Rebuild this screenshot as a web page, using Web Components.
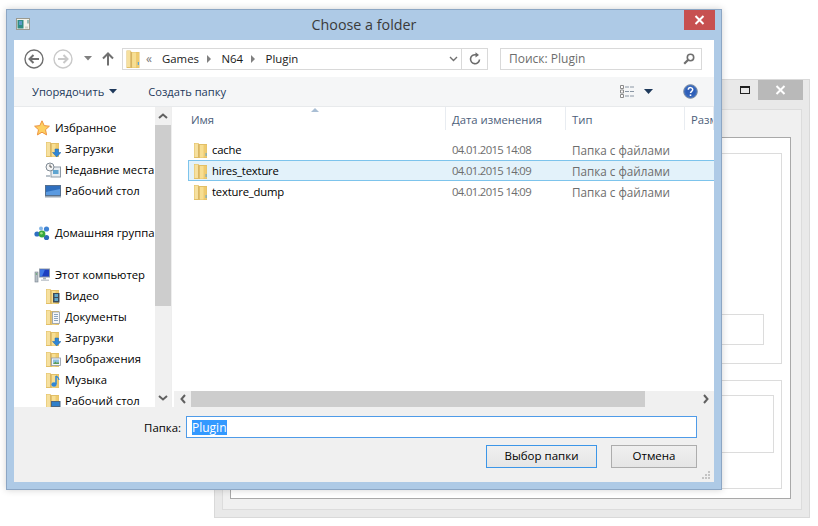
<!DOCTYPE html>
<html>
<head>
<meta charset="utf-8">
<title>Choose a folder</title>
<style>
    html, body { margin: 0; height: 100%; background: #fff; overflow: hidden; }
    body { font: 11.3px "Open Sans", "Noto Sans", sans-serif; }
</style>
</head>
<body>
<back-window></back-window>
<file-dialog heading="Choose a folder">
    <tree-item slot="tree" icon="star" label="Избранное"></tree-item>
    <tree-item slot="tree" icon="downloads" label="Загрузки" sub></tree-item>
    <tree-item slot="tree" icon="recent" label="Недавние места" sub></tree-item>
    <tree-item slot="tree" icon="desktop" label="Рабочий стол" sub></tree-item>
    <tree-item slot="tree"></tree-item>
    <tree-item slot="tree" icon="homegroup" label="Домашняя группа"></tree-item>
    <tree-item slot="tree"></tree-item>
    <tree-item slot="tree" icon="computer" label="Этот компьютер"></tree-item>
    <tree-item slot="tree" icon="video" label="Видео" sub></tree-item>
    <tree-item slot="tree" icon="docs" label="Документы" sub></tree-item>
    <tree-item slot="tree" icon="downloads" label="Загрузки" sub></tree-item>
    <tree-item slot="tree" icon="images" label="Изображения" sub></tree-item>
    <tree-item slot="tree" icon="music" label="Музыка" sub></tree-item>
    <tree-item slot="tree" icon="deskfolder" label="Рабочий стол" sub></tree-item>

    <file-row slot="files" name="cache" date="04.01.2015 14:08" type="Папка с файлами"></file-row>
    <file-row slot="files" name="hires_texture" date="04.01.2015 14:09" type="Папка с файлами" selected></file-row>
    <file-row slot="files" name="texture_dump" date="04.01.2015 14:09" type="Папка с файлами"></file-row>
</file-dialog>

<script>
'use strict';

const folderBase = `
    <path d="M1 1h4.2l1 1H14v14H1z" fill="#e2bf66"/>
    <path d="M1.5 1.5h3.7V15H1.5z" fill="#f6e09f"/>
    <path d="M5.2 2l1.6 1v13L5.2 15z" fill="#d6b262"/>
    <path d="M6.8 3H13.5v12.5H6.8z" fill="#efcb70"/>
    <path d="M6.8 3H10.5v12.5H6.8z" fill="#f7de92"/>`;

const icons = {
    folder: folderBase + '<path d="M12.6 11h1v3h-1z" fill="#5aa5d8"/>',
    star: '<path d="M8 .8l2.2 4.8 5.2.6-3.9 3.5 1.1 5.2L8 12.2l-4.6 2.7 1.1-5.2L.6 6.2l5.2-.6z" fill="#fdd062" stroke="#ee9440"/>',
    downloads: folderBase + '<path d="M10 8h3.5v3.5H16L11.7 16 7.5 11.5H10z" fill="#2f86d6" stroke="#1b66ad" stroke-width=".5"/>',
    recent: '<rect x="6" y="5" width="9.5" height="10" fill="#e8edf1" stroke="#8d99a5"/><rect x="8" y="8" width="5.5" height="4" fill="#5fa4d0"/><circle cx="5" cy="5" r="4" fill="#f5f5f5" stroke="#7f8a94"/><path d="M5 2.5V5h2" fill="none" stroke="#555"/><path d="M1 13h4v2H1z" fill="#b9c2ca"/>',
    desktop: '<rect x="0" y="2" width="16" height="11" fill="#55708f"/><rect x="1" y="3" width="14" height="9" fill="#2f6fbe"/><path d="M1 9l14-3v6H1z" fill="#5a9ae0"/><rect x="0" y="13" width="16" height="1.5" fill="#9aa6b2"/>',
    homegroup: '<circle cx="3" cy="9" r="2.6" fill="#2e6fc2"/><circle cx="12.5" cy="4" r="2.6" fill="#3f83d4"/><circle cx="12.5" cy="12.5" r="2.6" fill="#2c69b8"/><circle cx="7" cy="3.4" r="2" fill="#86b7e6"/><circle cx="8" cy="9" r="3.4" fill="#37a83f"/><circle cx="7.4" cy="8.2" r="1.3" fill="#9adf7e"/>',
    computer: '<rect x="5" y="1.5" width="11" height="9" fill="#8e9aa6"/><rect x="6" y="2.5" width="9" height="7" fill="#1d3fc0"/><path d="M6 2.5h5l-3 7H6z" fill="#3f78e6"/><rect x="9" y="10.5" width="3" height="2" fill="#aab2ba"/><rect x="7" y="12.5" width="8" height="1.5" fill="#c6ccd2"/><rect x="1" y="5" width="3" height="10" fill="#b7bfc6" stroke="#77838e" stroke-width=".6"/><rect x="1.8" y="6.5" width="1.4" height="1" fill="#3f9b45"/>',
    video: folderBase + '<rect x="8" y="5" width="6.5" height="9.5" fill="#3c4a57"/><path d="M9.5 6h3.5v3H9.5zM9.5 10h3.5v3H9.5z" fill="#5fa6c9"/>',
    docs: folderBase + '<rect x="7.5" y="3" width="7" height="11.5" fill="#f6f7f9" stroke="#8f9aa6" stroke-width=".8"/><path d="M9 5.5h4M9 7.5h4M9 9.5h4M9 11.5h4" stroke="#8ba4bd"/>',
    images: folderBase + '<rect x="6.5" y="7" width="9" height="7.5" fill="#f4f6f8" stroke="#8f9aa6" stroke-width=".8"/><rect x="8" y="8.5" width="6" height="4.5" fill="#8fc0e2"/><path d="M8 13l2.5-2.5 1.5 1.5 1-1 1 1v1z" fill="#5c9c56"/>',
    music: folderBase + '<path d="M11 4v8" stroke="#2f86d6" stroke-width="1.5"/><path d="M11 4c1.5 1 3 1.6 3 4" fill="none" stroke="#2f86d6" stroke-width="1.2"/><ellipse cx="9" cy="12.5" rx="2.6" ry="2.2" fill="#2f86d6"/>',
    deskfolder: folderBase + '<rect x="6" y="8" width="9.5" height="6" fill="#4a6480"/><rect x="7" y="9" width="7.5" height="4" fill="#2f7fc9"/><rect x="6" y="14" width="9.5" height="1.5" fill="#33475b"/>'
};

class AppIcon extends HTMLElement {
    connectedCallback() {
        const size = this.getAttribute('size') || 16;
        this.attachShadow({ mode: 'open' }).innerHTML = `
            <style>:host { display: block; width: ${size}px; height: ${size}px; } svg { display: block; }</style>
            <svg width="${size}" height="${size}" viewBox="0 0 16 16">${icons[this.getAttribute('name')]}</svg>`;
    }
}

class TreeItem extends HTMLElement {
    connectedCallback() {
        const icon = this.getAttribute('icon');
        const sub = this.hasAttribute('sub');
        this.attachShadow({ mode: 'open' }).innerHTML = `
            <style>
                :host { display: flex; align-items: center; height: 21px; gap: ${sub ? 4 : 5}px; white-space: nowrap;
                    padding-left: ${sub ? 31 : 20}px; color: #000; }
                span { position: relative; top: -.5px; }
            </style>
            ${icon ? `<app-icon name="${icon}"></app-icon><span>${this.getAttribute('label')}</span>` : ''}`;
    }
}

class FileRow extends HTMLElement {
    connectedCallback() {
        const on = this.hasAttribute('selected');
        this.attachShadow({ mode: 'open' }).innerHTML = `
            <style>
                :host { display: grid; grid-template-columns: 263px 120px 1fr; align-items: center; box-sizing: border-box;
                    width: 560px; height: 21px; white-space: nowrap; margin-left: 14px;
                    border: 1px solid ${on ? '#7dc4ec' : 'transparent'}; background: ${on ? '#e3f2fa' : 'transparent'}; }
                .name { display: flex; align-items: center; gap: 3px; padding-left: 4px; color: #000; letter-spacing: -.2px; }
                .date { color: #6d6d6d; letter-spacing: -.65px; }
                .type { color: #6d6d6d; font-size: 11.7px; }
            </style>
            <div class="name"><app-icon name="folder"></app-icon><span>${this.getAttribute('name')}</span></div>
            <div class="date">${this.getAttribute('date')}</div>
            <div class="type">${this.getAttribute('type')}</div>`;
    }
}

class ScrollBar extends HTMLElement {
    connectedCallback() {
        const vertical = this.getAttribute('orient') === 'v';
        const a = vertical ? 'M4 10l4-3.5 4 3.5' : 'M10 4L6.5 8l3.5 4';
        const b = vertical ? 'M4 6l4 3.5L12 6' : 'M6 4l3.5 4L6 12';
        this.attachShadow({ mode: 'open' }).innerHTML = `
            <style>
                :host { display: flex; flex-direction: ${vertical ? 'column' : 'row'}; background: #f0f0f0; flex: none;
                    ${vertical ? 'width: 16px;' : 'height: 16px;'} }
                .arrow { flex: none; display: flex; align-items: center; justify-content: center;
                    ${vertical ? 'height: 18px;' : 'width: 17px;'} }
                .thumb { background: #cdcdcd; flex: none; ${this.getAttribute('style-thumb')} }
                .rest { flex: 1; }
                svg { display: block; }
                path { fill: none; stroke: #606060; stroke-width: 2; }
            </style>
            <div class="arrow"><svg width="16" height="16" viewBox="0 0 16 16"><path d="${a}"/></svg></div>
            <div class="thumb"></div>
            <div class="rest"></div>
            <div class="arrow"><svg width="16" height="16" viewBox="0 0 16 16"><path d="${b}"/></svg></div>`;
    }
}

class AddressBar extends HTMLElement {
    connectedCallback() {
        const sep = '<svg class="sep" width="5" height="8" viewBox="0 0 5 8"><path d="M0 0l4 4-4 4z" fill="#808080"/></svg>';
        this.attachShadow({ mode: 'open' }).innerHTML = `
            <style>
                :host { display: flex; align-items: center; box-sizing: border-box; width: 366px; height: 22px;
                    border: 1px solid #d9d9d9; color: #1a1a1a; white-space: nowrap; font-size: 11.4px; }
                .big { margin: 0 0 0 3px; width: 14px; height: 18px; flex: none; }
                .more { margin-left: 6px; color: #777; width: 15px; letter-spacing: -1px; font-size: 12px; }
                .crumb { margin-left: 1px; }
                .sep { margin: 0 0 0 8px; }
                .crumb + .sep + .crumb { margin-left: 9.5px; }
                .end { margin-left: auto; display: flex; height: 100%; align-items: center; }
                .chev { width: 15px; display: flex; justify-content: center; }
                .refresh { width: 25px; height: 100%; border-left: 1px solid #d9d9d9; display: flex; align-items: center; justify-content: center; }
            </style>
            <svg class="big" viewBox="0 0 14 18">
                <path d="M.5 .5h4l1 1.5h8V18H.5z" fill="#e2bf66"/>
                <path d="M1 1h3.5V17H1z" fill="#f6e09f"/>
                <path d="M4.5 1.5l1.6 1V18l-1.6-1z" fill="#d6b262"/>
                <path d="M6.1 2.5H13V17.5H6.1z" fill="#efcb70"/>
                <path d="M6.1 2.5H10V17.5H6.1z" fill="#f7de92"/>
                <path d="M11.8 12h1.2v3h-1.2z" fill="#5aa5d8"/>
            </svg>
            <span class="more">«</span>
            <span class="crumb">Games</span>${sep}
            <span class="crumb">N64</span>${sep}
            <span class="crumb">Plugin</span>
            <div class="end">
                <div class="chev"><svg width="9" height="6" viewBox="0 0 9 6"><path d="M1 1l3.5 3.5L8 1" fill="none" stroke="#707070" stroke-width="1.4"/></svg></div>
                <div class="refresh"><svg width="14" height="14" viewBox="0 0 14 14"><path d="M11.5 7.5A4.5 4.5 0 1 1 8 2.8" fill="none" stroke="#6b6b6b" stroke-width="1.6"/><path d="M7.5 .2v5.4L11 2.9z" fill="#6b6b6b"/></svg></div>
            </div>`;
    }
}

class FileDialog extends HTMLElement {
    constructor() {
        super();
        const heading = this.getAttribute('heading');
        this.attachShadow({ mode: 'open' }).innerHTML = `
            <style>
                :host { position: absolute; left: 6px; top: 9px; width: 716px; height: 481px; box-sizing: border-box;
                    display: flex; flex-direction: column; padding: 0 7px 7px; background: #aecae6; border: 1px solid #8ca6c4;
                    box-shadow: 0 0 7px rgba(0,0,0,.18); font: 11.3px "Open Sans", "Noto Sans", sans-serif; }
                .title { height: 30px; flex: none; display: grid; grid-template-columns: 1fr auto 1fr; color: #3a3a3a; font-size: 14.3px; }
                .title h1 { margin: 0; font: inherit; line-height: 29px; }
                .logo { margin: 8px 0 0 2px; display: block; }
                .close { justify-self: end; width: 31px; height: 20px; margin-right: -1px; background: #c75050;
                    display: flex; align-items: center; justify-content: center; }
                .body { flex: 1; min-height: 0; display: flex; flex-direction: column; background: #fff; }
                .nav { height: 37px; flex: none; display: flex; align-items: center; padding-left: 10px; }
                .nav svg { display: block; flex: none; }
                .search { margin-left: 12px; width: 202px; height: 22px; box-sizing: border-box; border: 1px solid #d9d9d9;
                    display: flex; align-items: center; justify-content: space-between; padding: 0 6px 0 8px; color: #6d6d6d; font-size: 12px; }
                .commands { height: 30px; flex: none; box-sizing: border-box; background: #f5f6f7; border-bottom: 1px solid #e8eaec;
                    display: flex; align-items: center; padding-left: 18px; color: #1e395b; font-size: 11.15px; }
                .commands svg { display: block; flex: none; }
                .main { flex: 1; min-height: 0; display: flex; }
                .tree { width: 141px; flex: none; padding-top: 10px; box-sizing: border-box; overflow: hidden; }
                .gap { width: 2px; box-sizing: content-box; flex: none; border-left: 1px solid #eeeeee; }
                .list { flex: 1; min-width: 0; display: flex; flex-direction: column; overflow: hidden; }
                .head { height: 23px; flex: none; position: relative; display: grid; grid-template-columns: 272px 120px 119px 1fr; color: #4c607a; }
                .head div { padding-left: 6px; line-height: 26px; border-right: 1px solid #e8ecf1; white-space: nowrap; overflow: hidden; }
                .head div:first-child { padding-left: 17px; }
                .head div:last-child { border: 0; }
                .sort { position: absolute; left: 137px; top: 1px; }
                .rows { flex: 1; min-height: 0; padding-top: 9px; overflow: hidden; }
                .bottom { height: 75px; flex: none; box-sizing: border-box; position: relative; background: #f0f0f0;
                    padding: 9px 17px 0 0; display: flex; flex-direction: column; gap: 7px; }
                .field { display: flex; justify-content: flex-end; align-items: center; gap: 5px; color: #000; font-size: 11.4px; }
                .input { width: 511px; height: 22px; box-sizing: border-box; border: 1px solid #4f9be8; background: #fff;
                    padding-left: 5px; display: flex; align-items: center; font-size: 12px; }
                .input span { background: #3399ff; color: #fff; line-height: 15px; }
                .buttons { display: flex; justify-content: flex-end; gap: 14px; }
                .btn { width: 86px; height: 23px; box-sizing: border-box; border: 1px solid #adadad; color: #000; font-size: 11.5px;
                    background: linear-gradient(#f0f0f0, #e5e5e5); text-align: center; line-height: 20px; }
                .btn.primary { width: 111px; border-color: #3c96e8; }
                .grip { position: absolute; right: 3px; bottom: 2px; }
            </style>
            <div class="title">
                <svg class="logo" width="14" height="12" viewBox="0 0 14 12">
                    <rect x=".5" y=".5" width="13" height="11" fill="#f2f2ea" stroke="#9a9a90"/>
                    <rect x="1.5" y="2" width="6" height="8.5" fill="#2f8c83"/>
                    <rect x="3" y="3" width="3" height="4" fill="#5a9ac8"/>
                    <rect x="9" y="8.5" width="3" height="2" fill="#cfcfc6"/>
                    <rect x="11.5" y="2" width="1" height="3.5" fill="#3f8a84"/>
                </svg>
                <h1>${heading}</h1>
                <div class="close"><svg width="11" height="10" viewBox="0 0 11 10"><path d="M1.5 1l8 8M9.5 1l-8 8" stroke="#fff" stroke-width="2"/></svg></div>
            </div>
            <div class="body">
                <div class="nav">
                    <svg width="20" height="20" viewBox="0 0 20 20"><circle cx="10" cy="10" r="9" fill="none" stroke="#6f6f6f" stroke-width="1.4"/><path d="M15 10H6M9.5 6L5.5 10l4 4" fill="none" stroke="#6f6f6f" stroke-width="2"/></svg>
                    <svg style="margin-left:9px" width="20" height="20" viewBox="0 0 20 20"><circle cx="10" cy="10" r="9" fill="none" stroke="#c9c9c9" stroke-width="1.4"/><path d="M5 10h9M10.5 6l4 4-4 4" fill="none" stroke="#c9c9c9" stroke-width="2"/></svg>
                    <svg style="margin-left:11px" width="8" height="5" viewBox="0 0 8 5"><path d="M0 0h8L4 4.5z" fill="#808080"/></svg>
                    <svg style="margin-left:10px" width="12" height="14" viewBox="0 0 12 14"><path d="M6 13.5V2M1 6.5L6 1.5l5 5" fill="none" stroke="#707070" stroke-width="2"/></svg>
                    <address-bar style="margin-left:8px"></address-bar>
                    <div class="search"><span>Поиск: Plugin</span><svg width="12" height="12" viewBox="0 0 12 12"><circle cx="7.5" cy="4.5" r="3.2" fill="none" stroke="#6f6f6f" stroke-width="1.6"/><path d="M5 7L1.2 10.8" stroke="#6f6f6f" stroke-width="2.2"/></svg></div>
                </div>
                <div class="commands">
                    <span>Упорядочить</span>
                    <svg style="margin-left:5px" width="8" height="5" viewBox="0 0 8 5"><path d="M0 0h8L4 4.5z" fill="#1e395b"/></svg>
                    <span style="margin-left:31px">Создать папку</span>
                    <svg style="margin-left:auto" width="15" height="13" viewBox="0 0 15 13"><path d="M.5.5h3v3h-3zM.5 5h3v3h-3zM.5 9.5h3v3h-3z" fill="#fff" stroke="#8a8a8a"/><path d="M5 2h10M5 6.5h10M5 11h10" stroke="#8a96a4" stroke-dasharray="4 1"/><path d="M2 2h.1M2 6.5h.1M2 11h.1" stroke="#c0504d"/></svg>
                    <svg style="margin-left:9px" width="9" height="5" viewBox="0 0 9 5"><path d="M0 0h9L4.5 5z" fill="#1e395b"/></svg>
                    <svg style="margin:0 16px 0 30px" width="15" height="15" viewBox="0 0 15 15"><circle cx="7.5" cy="7.5" r="6.8" fill="#3a6cc0" stroke="#7a8aa0"/><circle cx="7.5" cy="7.5" r="5" fill="#2f5fb8"/><path d="M5.3 5.8c.2-3 4.6-2.8 4.4 0-.1 1.5-2.2 1.6-2.2 3.3" fill="none" stroke="#fff" stroke-width="1.5"/><path d="M6.7 10.4h1.6V12H6.7z" fill="#fff"/></svg>
                </div>
                <div class="main">
                    <div class="tree"><slot name="tree"></slot></div>
                    <scroll-bar orient="v" style-thumb="height:181px"></scroll-bar>
                    <div class="gap"></div>
                    <div class="list">
                        <div class="head">
                            <div>Имя</div><div>Дата изменения</div><div>Тип</div><div>Размер</div>
                            <svg class="sort" width="8" height="4" viewBox="0 0 8 4"><path d="M4 0l4 4H0z" fill="#a9bed4"/></svg>
                        </div>
                        <div class="rows"><slot name="files"></slot></div>
                        <scroll-bar orient="h" style-thumb="width:454px"></scroll-bar>
                    </div>
                </div>
                <div class="bottom">
                    <div class="field"><span>Папка:</span><div class="input"><span>Plugin</span></div></div>
                    <div class="buttons"><div class="btn primary">Выбор папки</div><div class="btn">Отмена</div></div>
                    <svg class="grip" width="9" height="9" viewBox="0 0 9 9"><path d="M6 0h2v2H6zM3 3h2v2H3zM6 3h2v2H6zM0 6h2v2H0zM3 6h2v2H3zM6 6h2v2H6z" fill="#c4c4c4"/></svg>
                </div>
            </div>`;
    }
}

class BackWindow extends HTMLElement {
    constructor() {
        super();
        this.attachShadow({ mode: 'open' }).innerHTML = `
            <style>
                :host { position: absolute; left: 214px; top: 79px; width: 596px; height: 439px; box-sizing: border-box;
                    display: flex; flex-direction: column; padding: 0 7px 7px; background: #e9e9e9; border: 1px solid #d9d9d9; }
                .caption { height: 29px; flex: none; display: flex; justify-content: flex-end; }
                .max { width: 10px; height: 8px; box-sizing: border-box; border: 1px solid #222; border-top-width: 2px; margin: 6px 8px 0 0; }
                .close { width: 45px; height: 20px; background: #b9b9b9; margin-right: -1px; display: flex; align-items: center; justify-content: center; }
                .client { flex: 1; display: flex; box-sizing: border-box; background: #f0f0f0; border: 1px solid #dcdcdc; padding: 27px 10px 10px 7px; }
                .group { flex: 1; box-sizing: border-box; background: #fff; border: 1px solid #a9a9a9; padding: 15px 8px 9px 10px;
                    display: flex; flex-direction: column; gap: 16px; }
                .box { box-sizing: border-box; border: 1px solid #dcdcdc; background: #fff; }
                .upper { height: 211px; padding: 160px 17px 18px 0; display: flex; }
                .lower { flex: 1; padding: 14px 7px 35px 0; display: flex; }
                .inner { flex: 1; box-sizing: border-box; border: 1px solid #dcdcdc; }
            </style>
            <div class="caption">
                <div class="max"></div>
                <div class="close"><svg width="11" height="10" viewBox="0 0 11 10"><path d="M1.5 1l8 8M9.5 1l-8 8" stroke="#fff" stroke-width="2"/></svg></div>
            </div>
            <div class="client">
                <div class="group">
                    <div class="box upper"><div class="inner"></div></div>
                    <div class="box lower"><div class="inner"></div></div>
                </div>
            </div>`;
    }
}

customElements.define('app-icon', AppIcon);
customElements.define('tree-item', TreeItem);
customElements.define('file-row', FileRow);
customElements.define('scroll-bar', ScrollBar);
customElements.define('address-bar', AddressBar);
customElements.define('file-dialog', FileDialog);
customElements.define('back-window', BackWindow);
</script>
</body>
</html>
